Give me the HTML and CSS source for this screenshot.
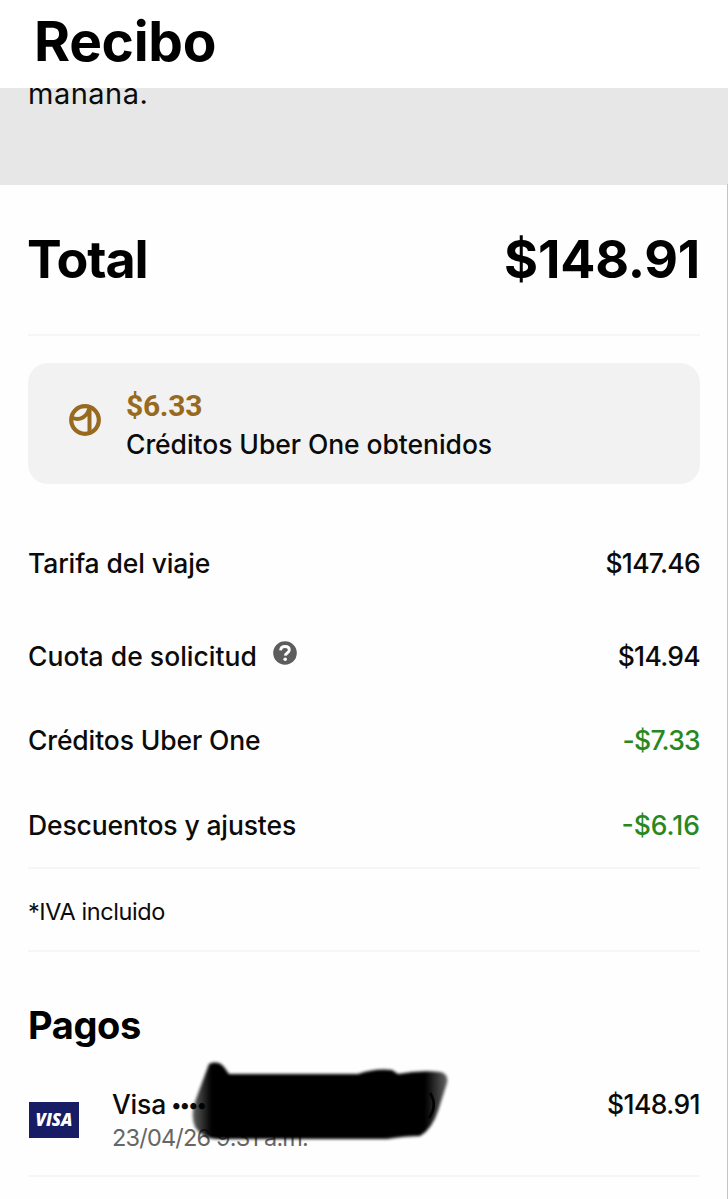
FILE: index.html
```html
<!DOCTYPE html>
<html lang="es">
<head>
<meta charset="utf-8">
<title>Recibo</title>
<link rel="stylesheet" href="styles.css">
</head>
<body>
<main class="screen">
  <header class="header"><h1 class="title">Recibo</h1></header>
  <section class="band"><p class="note">manana.</p></section>
  <section class="total row">
    <h2 class="total-label">Total</h2>
    <span class="total-amount">$148.91</span>
  </section>
  <section class="card">
    <svg class="coin" viewBox="0 0 32 32" fill="none" stroke="#976a20">
      <circle cx="16" cy="16" r="13.8" stroke-width="4.2"/>
      <path d="M3.5 14C11 16.8 18 13 20.5 4V29" stroke-width="4"/>
    </svg>
    <div class="card-text">
      <span class="card-amount">$6.33</span>
      <span class="card-label">Créditos Uber One obtenidos</span>
    </div>
  </section>
  <section class="fares">
    <div class="row fare first"><span>Tarifa del viaje</span><span class="amount">$147.46</span></div>
    <div class="row fare"><span class="with-help"><span class="help-label">Cuota de solicitud</span>
      <svg class="help" viewBox="0 0 24 24"><circle cx="12" cy="12" r="11.8" fill="#5d5d5d"/><path d="M7.6 9.3C7.8 6.6 9.6 5.5 12 5.5s4.3 1.3 4.3 3.6c0 2.9-3.8 2.8-4 5.5" fill="none" stroke="#fff" stroke-width="2.9"/><circle cx="12.2" cy="18.2" r="1.8" fill="#fff"/></svg></span><span class="amount">$14.94</span></div>
    <div class="row fare"><span>Créditos Uber One</span><span class="amount credit">-$7.33</span></div>
    <div class="row fare"><span>Descuentos y ajustes</span><span class="amount credit last-credit">-$6.16</span></div>
  </section>
  <p class="tax">*IVA incluido</p>
  <h2 class="payments-title">Pagos</h2>
  <section class="payment">
    <svg class="visa" viewBox="0 0 50 36"><rect width="50" height="36" fill="#181c64"/><text x="6.5" y="24" textLength="37" lengthAdjust="spacingAndGlyphs" class="visa-text">VISA</text></svg>
    <div class="payment-text">
      <span class="method">Visa<span class="dots">••••</span></span>
      <span class="date">23/04/26 9:31 a.m.</span>
    </div>
    <span class="amount pay-amount">$148.91</span>
    <svg class="scribble" viewBox="180 1050 290 100">
      <defs>
        <filter id="soft" x="-10%" y="-20%" width="120%" height="140%"><feGaussianBlur stdDeviation="1.6"/></filter>
        <linearGradient id="ink" gradientUnits="userSpaceOnUse" x1="194" y1="0" x2="448" y2="0">
          <stop offset="0" stop-color="#000" stop-opacity=".65"/><stop offset=".07" stop-color="#000"/>
          <stop offset=".91" stop-color="#000"/><stop offset="1" stop-color="#000" stop-opacity=".6"/>
        </linearGradient>
      </defs>
      <path fill="url(#ink)" filter="url(#soft)" d="M209 1063Q218 1059 224 1066L229 1073H358Q375 1067 392 1069L398 1073Q420 1069 440 1071Q449 1073 447 1082L438 1110Q432 1128 420 1135Q405 1135 387 1138H216Q202 1137 195 1126Q190 1114 196 1098Z"/>
      <path d="M430 1092Q438 1104 429 1117" fill="none" stroke="#000" stroke-width="2.6"/>
    </svg>
  </section>
</main>
</body>
</html>
```
FILE: styles.css
```css
* { box-sizing: border-box; margin: 0; }
body { background: #fefefe; color: #0b0b0b; font-family: Inter, "Liberation Sans", sans-serif; line-height: 1; white-space: nowrap; }
.screen { position: relative; width: 728px; height: 1199px; overflow: hidden; background: #fefefe; }
.screen::after { content: ""; position: absolute; top: 184px; right: 0; bottom: 0; width: 1px; background: #c4c4c4; }
.row { display: flex; align-items: center; justify-content: space-between; }
.header { height: 88px; padding: 14px 0 0 34px; background: #fff; }
.title { font-size: 55px; font-weight: 700; letter-spacing: -.3px; color: #000; }
.band { height: 97px; padding: 0 28px; background: #e7e7e7; }
.note { font-size: 29px; font-weight: 400; line-height: 30px; letter-spacing: .5px; transform: translateY(-9px); clip-path: inset(7px 0 0 0); }
.total { height: 151px; margin: 0 28px; border-bottom: 2px solid #f6f6f6; }
.total-label { font-size: 52px; font-weight: 700; letter-spacing: -1.1px; margin-left: -1px; color: #000; }
.total-amount { font-size: 52px; font-weight: 700; letter-spacing: -.2px; color: #000; }
.card { display: flex; align-items: center; height: 121px; margin: 27px 28px 0; padding-left: 41px; border-radius: 20px; background: #f2f2f2; }
.coin { width: 32px; height: 32px; margin: -7px 25px 0 0; }
.card-text { display: flex; flex-direction: column; padding-top: 3px; }
.card-amount { color: #976a20; font-family: Roboto, sans-serif; font-size: 30px; font-weight: 700; line-height: 38px; letter-spacing: -.3px; }
.card-label { font-size: 26.5px; font-weight: 500; line-height: 38px; letter-spacing: -.06px; }
.fares { margin: 28px 28px 0; border-bottom: 2px solid #f6f6f6; font-size: 26.5px; font-weight: 500; letter-spacing: -.13px; }
.fare { height: 84.6px; }
.first { height: 101.6px; }
.with-help { display: flex; align-items: center; gap: 16px; }
.help-label { letter-spacing: .02px; }
.help { width: 24px; height: 24px; margin-top: -6px; }
.amount { font-size: 26.5px; font-weight: 500; letter-spacing: -.7px; }
.credit { color: #28881d; }
.last-credit { letter-spacing: 0; }
.tax { height: 82.6px; margin: 0 28px; border-bottom: 2px solid #f6f6f6; font-size: 23.5px; line-height: 86px; letter-spacing: -.41px; }
.payments-title { margin: 54px 28px 0; font-size: 38px; font-weight: 700; line-height: 38px; letter-spacing: -.4px; color: #000; }
.payment { position: relative; display: flex; height: 133px; margin: 0 28px; border-bottom: 2px solid #f6f6f6; }
.visa { width: 50px; height: 36px; margin: 58px 33px 0 1px; }
.visa-text { fill: #fff; font: italic 800 17px "Open Sans", sans-serif; }
.payment-text { display: flex; flex-direction: column; padding-top: 43px; }
.method { font-size: 26.5px; font-weight: 500; line-height: 34px; letter-spacing: -.2px; }
.dots { margin-left: 5px; font-size: 20px; line-height: 1; letter-spacing: -2.2px; vertical-align: 2px; }
.date { margin-top: 1px; font-size: 23.5px; line-height: 32px; color: #666; letter-spacing: -.81px; }
.pay-amount { margin: 47px 0 0 auto; letter-spacing: -.6px; }
.scribble { position: absolute; left: 152px; top: 7px; width: 290px; height: 100px; overflow: visible; }
```
